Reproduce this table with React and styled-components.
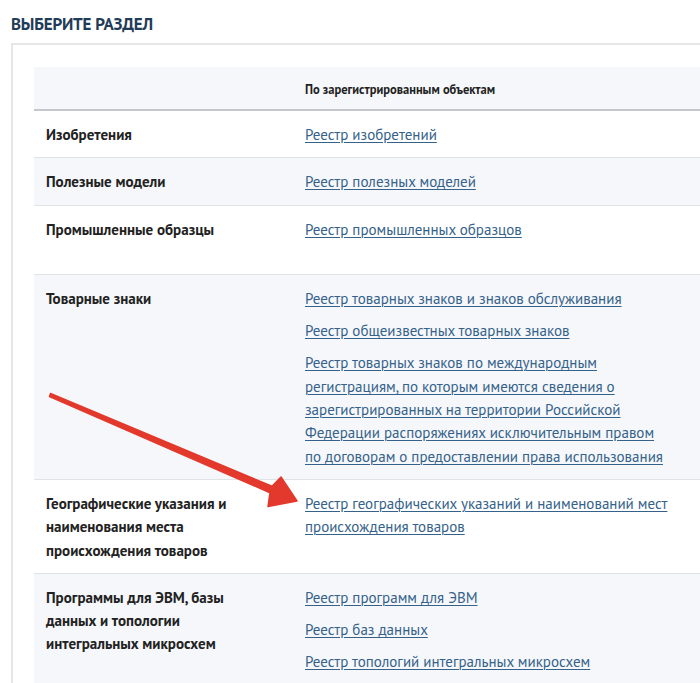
import React from "react";
import styled, { createGlobalStyle } from "styled-components";

const GlobalStyle = createGlobalStyle`
  html, body { margin: 0; padding: 0; background: #fff; }
  body { font-family: "PT Sans", Roboto, "Noto Sans", sans-serif; color: #222; }
`;

const Page = styled.div`
  position: relative;
  width: 700px;
  height: 683px;
  overflow: hidden;
  padding: 14px 0 0 11px;
  box-sizing: border-box;
`;

const Title = styled.h2`
  margin: 0 0 9px;
  font-size: 17px;
  line-height: 20px;
  font-weight: 700;
  color: #1f3c58;
  letter-spacing: -0.2px;
`;

const Panel = styled.div`
  border-top: 2px solid #e6e6e6;
  border-left: 2px solid #e6e6e6;
  padding: 22px 0 0 21px;
`;

const Table = styled.div`
  display: flex;
  flex-direction: column;
`;

const Row = styled.div`
  display: grid;
  grid-template-columns: 271px 1fr;
  background: ${(p) => (p.$shaded ? "#f5f7fa" : "#fff")};
  border-bottom: 1px solid ${(p) => (p.$head ? "#c3c8d0" : "#dfe2e7")};
  ${(p) => p.$head && "border-bottom-width: 2px;"}
`;

const Label = styled.div`
  padding: 12px 52px ${(p) => (p.$extra ? "33px" : "11px")} 12px;
  font-size: 15px;
  line-height: 23.3px;
  font-weight: 700;
  color: #222;
`;

const Links = styled.div`
  padding: 12px 30px 11px 0;
  display: flex;
  flex-direction: column;
  gap: 9px;
`;

const HeadCell = styled.div`
  padding: 12px 0 10px;
  font-size: 12.5px;
  line-height: 20px;
  font-weight: 700;
  color: #222;
`;

const Link = styled.a`
  font-size: 15px;
  line-height: 23.3px;
  color: #35628a;
  text-decoration: underline;
  text-underline-offset: 2px;
  text-decoration-thickness: 1px;
  cursor: pointer;
`;

const ArrowLayer = styled.svg`
  position: absolute;
  left: 0;
  top: 0;
  pointer-events: none;
`;

const rows = [
  { label: "Изобретения", links: ["Реестр изобретений"] },
  { label: "Полезные модели", links: ["Реестр полезных моделей"], shaded: true },
  { label: "Промышленные образцы", links: ["Реестр промышленных образцов"], extra: true },
  {
    label: "Товарные знаки",
    shaded: true,
    links: [
      "Реестр товарных знаков и знаков обслуживания",
      "Реестр общеизвестных товарных знаков",
      "Реестр товарных знаков по международным регистрациям, по которым имеются сведения о зарегистрированных на территории Российской Федерации распоряжениях исключительным правом по договорам о предоставлении права использования",
    ],
  },
  {
    label: "Географические указания и наименования места происхождения товаров",
    links: ["Реестр географических указаний и наименований мест происхождения товаров"],
  },
  {
    label: "Программы для ЭВМ, базы данных и топологии интегральных микросхем",
    shaded: true,
    links: ["Реестр программ для ЭВМ", "Реестр баз данных", "Реестр топологий интегральных микросхем"],
  },
];

export default function App() {
  return (
    <>
      <GlobalStyle />
      <Page>
        <Title>ВЫБЕРИТЕ РАЗДЕЛ</Title>
        <Panel>
          <Table>
            <Row $shaded $head>
              <div />
              <HeadCell>По зарегистрированным объектам</HeadCell>
            </Row>
            {rows.map((r) => (
              <Row key={r.label} $shaded={r.shaded}>
                <Label $extra={r.extra}>{r.label}</Label>
                <Links>
                  {r.links.map((l) => (
                    <Link key={l}>{l}</Link>
                  ))}
                </Links>
              </Row>
            ))}
          </Table>
        </Panel>
        <ArrowLayer width="700" height="683" viewBox="0 0 700 683">
          <polygon
            points="50.5,393.4 272,486.3 281,477 297,501 268,506.5 270,492.7 49.5,396.6"
            fill="#e2392c"
            stroke="#e2392c"
            strokeWidth="1.5"
            strokeLinejoin="round"
          />
        </ArrowLayer>
      </Page>
    </>
  );
}
